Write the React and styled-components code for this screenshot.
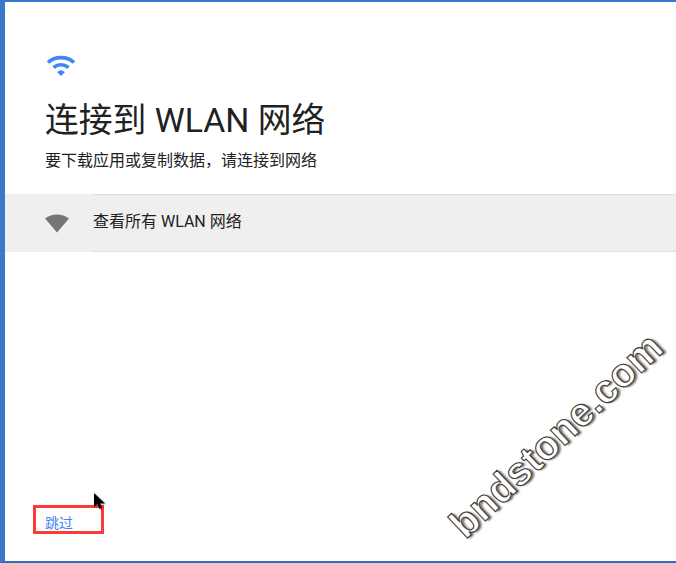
import React from 'react'
import styled, { createGlobalStyle } from 'styled-components'

const GlobalStyle = createGlobalStyle`
  html, body {
    margin: 0;
    padding: 0;
    background: #ffffff;
  }
  body {
    font-family: Roboto, "Noto Sans CJK SC", sans-serif;
  }
`

const Frame = styled.div`
  position: relative;
  box-sizing: border-box;
  width: 676px;
  height: 563px;
  overflow: hidden;
  display: flex;
  flex-direction: column;
  background: #ffffff;
  border-top: 2px solid #3b78c9;
  border-left: 5px solid #3b78c9;
  border-bottom: 2px solid #2f6db8;
`

const Header = styled.header`
  padding: 51px 40px 0;
  height: 192px;
  box-sizing: border-box;
  flex: none;
`

const WifiLogo = styled.svg`
  display: block;
  width: 30px;
  height: 24px;
  margin-left: 1px;
`

const Title = styled.h1`
  margin: 22px 0 0;
  font-size: 33.8px;
  line-height: 44px;
  font-weight: 400;
  color: #212121;
`

const Subtitle = styled.p`
  margin: 6px 0 0;
  font-size: 16px;
  line-height: 24px;
  color: #212121;
`

const NetworkRow = styled.div`
  display: flex;
  height: 58px;
  background: #efefef;
  flex: none;
`

const RowIcon = styled.div`
  width: 88px;
  flex: none;
  display: flex;
  align-items: center;
  padding-left: 39px;
  box-sizing: border-box;
`

const RowLabel = styled.div`
  flex: 1;
  display: flex;
  align-items: center;
  box-sizing: border-box;
  padding-bottom: 6px;
  border-top: 1px solid #dedede;
  border-bottom: 1px solid #dedede;
  font-size: 16px;
  color: #212121;
`

const Footer = styled.footer`
  margin-top: auto;
  padding: 0 0 28px 40px;
`

const SkipLink = styled.a`
  display: block;
  font-size: 14px;
  line-height: 20px;
  color: #4285f4;
`

const Annotation = styled.div`
  position: absolute;
  left: 28px;
  top: 503px;
  width: 71px;
  height: 29px;
  box-sizing: border-box;
  border: 3px solid #fb3a3a;
`

const Cursor = styled.svg`
  position: absolute;
  left: 88px;
  top: 490px;
  width: 16px;
  height: 20px;
  filter: drop-shadow(1px 1px 1px rgba(0, 0, 0, 0.35));
`

const Watermark = styled.div`
  position: absolute;
  left: 413px;
  top: 409px;
  font-family: "Liberation Sans", Arial, sans-serif;
  font-size: 40px;
  line-height: 48px;
  font-weight: 700;
  letter-spacing: 0.2px;
  white-space: nowrap;
  color: #ffffff;
  -webkit-text-stroke: 1.1px #3a3a3a;
  text-shadow: 2px 2px 2px rgba(0, 0, 0, 0.55);
  transform: rotate(-43.5deg);
  transform-origin: center;
`

const App = () => {
  return (
    <>
      <GlobalStyle />
      <Frame>
        <Header>
          <WifiLogo viewBox="0 0 30 24" fill="none" stroke="#4285f4" strokeWidth="3.6">
            <path d="M2 9.5C9 3 21 3 28 9.5" />
            <path d="M7.5 14.5C12 11 18 11 22.5 14.5" />
            <path d="M11 19L15 17L19 19L15 23Z" fill="#4285f4" stroke="none" />
          </WifiLogo>
          <Title>连接到 WLAN 网络</Title>
          <Subtitle>要下载应用或复制数据，请连接到网络</Subtitle>
        </Header>
        <NetworkRow>
          <RowIcon>
            <svg width="26" height="20" viewBox="0 0 26 20">
              <path d="M1 5.5C8 0 18 0 25 5.5L13 19.5Z" fill="#757575" />
            </svg>
          </RowIcon>
          <RowLabel>查看所有 WLAN 网络</RowLabel>
        </NetworkRow>
        <Footer>
          <SkipLink>跳过</SkipLink>
        </Footer>
        <Annotation />
        <Cursor viewBox="0 0 16 20">
          <path d="M1 1L1 15L4.5 12L6.5 17L9 16L7 11.5L12 11.5Z" fill="#000000" />
        </Cursor>
        <Watermark>bndstone.com</Watermark>
      </Frame>
    </>
  )
}

export default App
